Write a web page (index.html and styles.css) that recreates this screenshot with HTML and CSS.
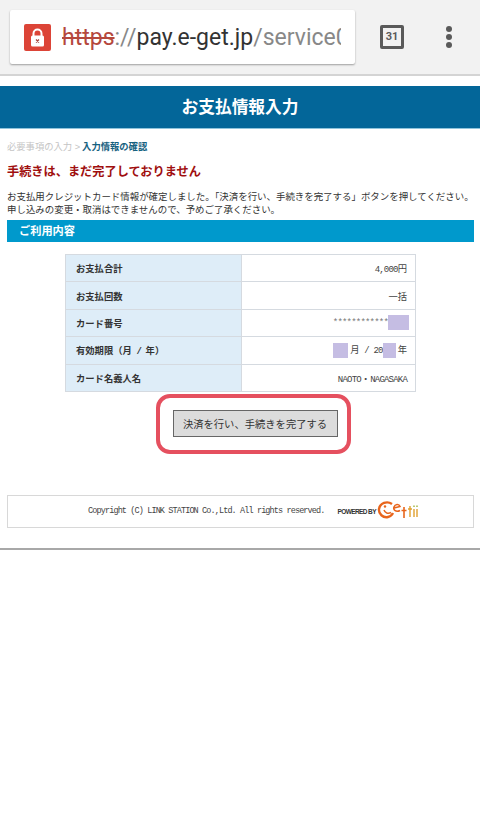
FILE: index.html
```html
<!DOCTYPE html>
<html lang="ja">
<head>
    <meta charset="UTF-8">
    <meta name="viewport" content="width=device-width, initial-scale=1.0">
    <title>お支払情報入力</title>
    <link rel="stylesheet" href="styles.css">
</head>
<body>
    <div class="toolbar">
        <div class="urlbar">
            <svg class="lock" width="27" height="27" viewBox="0 0 27 27">
                <rect width="27" height="27" rx="2" fill="#dc4437"/>
                <path d="M9.500 12V9.500a4 4 0 0 1 8 0V12" fill="none" stroke="#fff" stroke-width="2"/>
                <rect x="7" y="11.500" width="13" height="11" rx="1.500" fill="#fff"/>
                <path d="M12 15.500l3 3M15 15.500l-3 3" stroke="#a5443c" stroke-width="1.200"/>
            </svg>
            <div class="url"><span class="scheme">https</span><span class="sep">://</span><span class="host">pay.e-get.jp</span><span class="sep">/service0</span></div>
        </div>
        <div class="tab-count">31</div>
        <div class="menu-dots"><i></i><i></i><i></i></div>
    </div>

    <h1 class="page-title">お支払情報入力</h1>

    <div class="content">
        <p class="crumbs"><span class="crumb-done">必要事項の入力 &gt;</span><b>入力情報の確認</b></p>
        <h2 class="warning">手続きは、まだ完了しておりません</h2>
        <p class="message">お支払用クレジットカード情報が確定しました。「決済を行い、手続きを完了する」ボタンを押してください。<br>申し込みの変更・取消はできませんので、予めご了承ください。</p>
        <h3 class="section-bar">ご利用内容</h3>

        <table class="detail">
            <tr><th>お支払合計</th><td><span class="latin">4,000</span>円</td></tr>
            <tr><th>お支払回数</th><td>一括</td></tr>
            <tr><th>カード番号</th><td><span class="latin stars">************</span><span class="mask mask-card"></span></td></tr>
            <tr><th>有効期限（月<span class="latin"> / </span>年）</th><td><span class="mask mask-month"></span>月<span class="latin"> / 20</span><span class="mask mask-year"></span>年</td></tr>
            <tr><th>カード名義人名</th><td><span class="latin">NAOTO</span>・<span class="latin">NAGASAKA</span></td></tr>
        </table>

        <div class="submit-area">
            <div class="highlight">
                <button class="submit">決済を行い、手続きを完了する</button>
            </div>
        </div>

        <div class="footer">
            <span class="copyright">Copyright (C) LINK STATION Co.,Ltd. All rights reserved.</span>
            <span class="powered">POWERED BY</span>
            <svg class="logo" width="42" height="24" viewBox="0 0 42 24">
                <path d="M15 5C10 1.500 3 4 2 10c-.6 5 4 9 9 8 2.500-.5 4-2 5-4" fill="none" stroke="#e8651c" stroke-width="2.400"/>
                <path d="M7 11c1 3 4 4 7 2.500" fill="none" stroke="#e8651c" stroke-width="1.500"/>
                <circle cx="8" cy="7.500" r="1.200" fill="#e8651c"/>
                <path d="M17 9l6-1.500c-1-3-5-2.500-6 .5-1 3 2 5.500 6 3.500" fill="none" stroke="#e8651c" stroke-width="1.600"/>
                <path d="M27 8v11M24.500 11.500h5" fill="none" stroke="#e8651c" stroke-width="1.600"/>
                <path d="M33 7v11M31 10h4M37 10v8M40 10v8" fill="none" stroke="#e0a030" stroke-width="1.400"/>
                <path d="M37 6.500v1.500M40 6.500v1.500" fill="none" stroke="#9db23a" stroke-width="1.400"/>
            </svg>
        </div>
    </div>
    <div class="end-line"></div>
</body>
</html>
```

FILE: styles.css
```css
* { box-sizing: border-box; }
body { margin: 0; background: #fff; font-family: "Liberation Sans", "Noto Sans CJK JP", sans-serif; color: #333; }

.toolbar { display: flex; align-items: flex-start; height: 76px; padding: 10px 0 0 10px; background: #f2f2f2; border-bottom: 2px solid #d4d4d4; }
.urlbar { display: flex; align-items: center; width: 345px; height: 54px; padding-left: 14px; background: #fff; border-radius: 2px; box-shadow: 0 1px 2px rgba(0,0,0,0.35); }
.lock { flex: none; }
.url { width: 279px; margin-left: 11px; overflow: hidden; white-space: nowrap; font-family: Roboto, sans-serif; font-size: 23px; color: #888; }
.scheme { color: #b5483d; text-decoration: line-through; }
.host { color: #333; }
.tab-count { width: 24px; height: 24px; margin: 15px 0 0 25px; border: 3px solid #5a5a5a; border-radius: 2px; font-family: Roboto, sans-serif; font-size: 11px; font-weight: 700; line-height: 18px; text-align: center; color: #5a5a5a; }
.menu-dots { display: flex; flex-direction: column; gap: 2px; margin: 16px 0 0 42px; }
.menu-dots i { width: 6px; height: 6px; border-radius: 50%; background: #5a5a5a; }

.page-title { margin: 10px 0 0; height: 43px; background: #036699; border-bottom: 1px solid #8fc4dc; color: #fff; font-size: 16.7px; font-weight: 700; line-height: 43px; text-align: center; }

.content { padding: 0 6px 0 7px; }
.crumbs { margin: 12px 0 0; font-size: 9.3px; line-height: 12px; color: #c4c4c4; }
.crumbs b { color: #16617f; }
.crumb-done { margin-right: 2px; }
.warning { margin: 11px 0 0; font-size: 12.2px; line-height: 16px; color: #a00f0f; }
.message { margin: 11px 0 0; font-size: 9.45px; line-height: 12.5px; color: #333; white-space: nowrap; }
.section-bar { margin: 4px 0 0; height: 22px; padding-left: 12px; background: #0099cc; color: #fff; font-size: 11.2px; line-height: 23px; }

.detail { width: 351px; margin: 12px 0 0 58px; border-collapse: collapse; table-layout: fixed; font-size: 9.3px; }
.detail th, .detail td { height: 27.4px; padding: 0 8px; border: 1px solid #d5dae0; }
.detail th { width: 176px; padding-left: 10px; background: #deedf8; text-align: left; font-weight: 700; color: #333; }
.detail td { text-align: right; color: #444; white-space: pre; }
.latin { font-family: "Liberation Mono", monospace; font-size: 9px; letter-spacing: -0.8px; }
.stars { color: #777; }
.mask { display: inline-block; height: 15px; vertical-align: middle; background: #c5bde3; }
.mask-card { width: 21px; margin-right: -2px; }
.mask-month { width: 15px; margin-right: 2px; }
.mask-year { width: 13px; margin-right: 2px; }

.submit-area { display: flex; justify-content: center; margin-top: 2px; padding-left: 26px; }
.highlight { display: flex; align-items: center; justify-content: center; width: 195px; height: 60px; padding-left: 3px; border: 4px solid #e5505f; border-radius: 14px; }
.submit { width: 165px; height: 27px; padding: 0; background: #dcdcdc; border: 1px solid #666; border-radius: 0; font-family: inherit; font-size: 10.3px; color: #333; }

.footer { display: flex; align-items: center; justify-content: center; height: 33px; margin-top: 41px; padding-left: 26px; border: 1px solid #d8d8d8; }
.copyright { font-family: "Liberation Mono", monospace; font-size: 8.5px; letter-spacing: -0.88px; color: #444; white-space: nowrap; }
.powered { margin-left: 13px; font-size: 6.5px; font-weight: 700; letter-spacing: -0.6px; color: #333; white-space: nowrap; }
.logo { margin-left: 1px; }

.end-line { height: 2px; margin-top: 20px; background: #a8a8a8; }
```
